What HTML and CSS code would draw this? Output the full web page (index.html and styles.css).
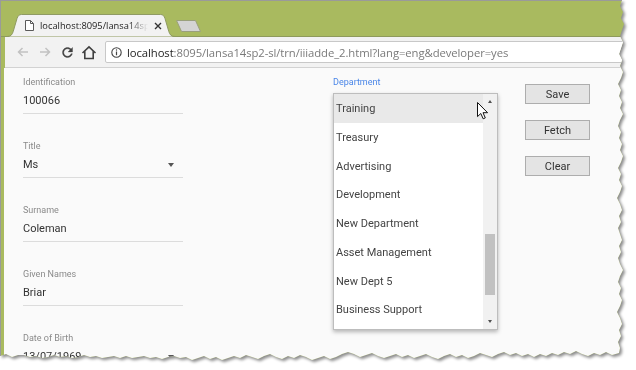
FILE: index.html
```html
<!DOCTYPE html>
<html>
<head>
<meta charset="utf-8">
<title>iiiadde_2</title>
<link rel="stylesheet" href="styles.css">
</head>
<body>
<div class="shot">
  <div class="frame">
    <div class="tabstrip">
      <div class="tab">
        <svg class="tab-bg" width="170" height="23" viewBox="0 0 170 23"><path d="M0 22.5 C4 22.5 5.2 20.5 6.2 17.5 L10 4.5 C11 1.8 12 0.5 14.5 0.5 H153.5 C156 0.5 157 1.8 158 4.5 L161.8 17.5 C162.8 20.5 164 22.5 168 22.5" fill="#f2f2f2" stroke="#8f9a63" stroke-width="1"/></svg>
        <svg class="favicon" width="9" height="11" viewBox="0 0 9 11"><path d="M0.5 0.5 H5.5 L8.5 3.5 V10.5 H0.5 Z" fill="#fff" stroke="#5a5a5a"/><path d="M5.5 0.5 V3.5 H8.5" fill="none" stroke="#5a5a5a"/></svg>
        <span class="tab-title">localhost:8095/lansa14sp2-sl/trn/iiiadde_2.html</span>
        <svg class="tab-close" width="8" height="8" viewBox="0 0 8 8"><path d="M1 1 L7 7 M7 1 L1 7" stroke="#333" stroke-width="1.4"/></svg>
      </div>
      <svg class="newtab" width="27" height="14" viewBox="0 0 27 14"><path d="M1.5 1.5 H20.5 L25.5 12.5 H6.5 Z" fill="#d4d4d4" stroke="#9aa07c" stroke-width="1" stroke-linejoin="round"/></svg>
    </div>
    <div class="toolbar">
      <span class="tbtn"><svg width="12" height="12" viewBox="0 0 12 12"><path d="M11 6 H1.5 M5.5 2 L1.5 6 L5.5 10" fill="none" stroke="#c2c2c2" stroke-width="1.5"/></svg></span>
      <span class="tbtn"><svg width="12" height="12" viewBox="0 0 12 12"><path d="M1 6 H10.5 M6.5 2 L10.5 6 L6.5 10" fill="none" stroke="#c2c2c2" stroke-width="1.5"/></svg></span>
      <span class="tbtn"><svg width="15" height="15" viewBox="0 0 24 24"><path d="M17.65 6.35C16.2 4.9 14.21 4 12 4c-4.42 0-7.99 3.58-7.99 8s3.57 8 7.99 8c3.73 0 6.84-2.55 7.73-6h-2.08c-.82 2.33-3.040 4-5.65 4-3.31 0-6-2.69-6-6s2.69-6 6-6c1.66 0 3.14.69 4.22 1.78L13 11h7V4l-2.35 2.35z" fill="#404040" stroke="#404040" stroke-width="0.6"/></svg></span>
      <span class="tbtn"><svg width="16" height="15" viewBox="0 0 16 15"><path d="M1.5 8 L8 1.8 L14.5 8 M3.8 6 V13.5 H12.2 V6" fill="none" stroke="#404040" stroke-width="1.6" stroke-linejoin="miter"/></svg></span>
      <div class="omnibox">
        <svg class="info" width="11" height="11" viewBox="0 0 11 11"><circle cx="5.5" cy="5.5" r="4.7" fill="none" stroke="#444" stroke-width="1.1"/><path d="M5.5 4.6 V8.3" stroke="#444" stroke-width="1.2"/><circle cx="5.5" cy="3" r="0.7" fill="#444"/></svg>
        <span class="url"><span class="host">localhost</span>:8095/lansa14sp2-sl/trn/iiiadde_2.html?lang=eng&amp;developer=yes</span>
      </div>
    </div>
    <div class="page">
      <div class="col-fields">
        <div class="field">
          <div class="label">Identification</div>
          <div class="value"><span>100066</span></div>
        </div>
        <div class="field">
          <div class="label">Title</div>
          <div class="value"><span>Ms</span><i class="caret"></i></div>
        </div>
        <div class="field">
          <div class="label">Surname</div>
          <div class="value"><span>Coleman</span></div>
        </div>
        <div class="field">
          <div class="label">Given Names</div>
          <div class="value"><span>Briar</span></div>
        </div>
        <div class="field">
          <div class="label">Date of Birth</div>
          <div class="value"><span>13/07/1969</span><i class="caret"></i></div>
        </div>
      </div>
      <div class="col-dept">
        <div class="label label-focus">Department</div>
        <div class="listbox">
          <ul class="options">
            <li class="selected">Training</li>
            <li>Treasury</li>
            <li>Advertising</li>
            <li>Development</li>
            <li>New Department</li>
            <li>Asset Management</li>
            <li>New Dept 5</li>
            <li>Business Support</li>
            <li>Marketing</li>
          </ul>
          <div class="scrollbar">
            <div class="sb-arrow"><i class="tri-up"></i></div>
            <div class="sb-track"><div class="sb-thumb"></div></div>
            <div class="sb-arrow"><i class="tri-down"></i></div>
          </div>
          <svg class="cursor" width="12" height="18" viewBox="0 0 12 18"><path d="M0.5 0.5 V14.6 L3.8 11.5 L6.2 16.8 L8.3 15.9 L6 10.7 H10.6 Z" fill="#fff" stroke="#111" stroke-width="1" stroke-linejoin="round"/></svg>
        </div>
      </div>
      <div class="col-btns">
        <button class="btn">Save</button>
        <button class="btn">Fetch</button>
        <button class="btn">Clear</button>
      </div>
    </div>
  </div>
</div>
</body>
</html>
```

FILE: styles.css
```css
* { box-sizing: border-box; margin: 0; padding: 0; }
html, body { background: #ffffff; }
body { width: 636px; height: 370px; overflow: hidden; font-family: Roboto, "Liberation Sans", sans-serif; }

.shot {
  width: 630px;
  height: 366px;
  filter: drop-shadow(2px 2px 1.5px rgba(0, 0, 0, 0.45));
}

.frame {
  width: 630px;
  height: 366px;
  background: #a9ba5f;
  border-top: 1px solid #9a9a9a;
  border-left: 1px solid #9a9a9a;
  display: flex;
  flex-direction: column;
  clip-path: polygon(0 0, 622px 0, 620px 6px, 623px 12px, 621px 18px, 624px 24px, 622px 30px, 620px 36px, 623px 42px, 621px 48px, 619px 54px, 622px 60px, 620px 66px, 623px 72px, 621px 78px, 618px 84px, 621px 90px, 619px 96px, 622px 102px, 620px 108px, 623px 114px, 620px 120px, 618px 126px, 621px 132px, 619px 138px, 622px 144px, 620px 150px, 623px 156px, 621px 162px, 618px 168px, 621px 174px, 619px 180px, 622px 186px, 620px 192px, 617px 198px, 620px 204px, 622px 210px, 619px 216px, 621px 222px, 618px 228px, 620px 234px, 622px 240px, 619px 246px, 621px 252px, 618px 258px, 620px 264px, 623px 270px, 620px 276px, 618px 282px, 621px 288px, 619px 294px, 622px 300px, 620px 306px, 617px 312px, 620px 318px, 622px 324px, 619px 330px, 621px 336px, 618px 342px, 620px 348px, 619px 353px, 612px 355px, 606px 352px, 600px 355px, 594px 353px, 588px 356px, 582px 354px, 576px 351px, 570px 354px, 564px 352px, 558px 355px, 552px 353px, 546px 356px, 540px 354px, 534px 357px, 528px 354px, 522px 356px, 516px 353px, 510px 355px, 504px 352px, 498px 354px, 492px 357px, 486px 355px, 480px 353px, 474px 356px, 468px 358px, 462px 355px, 456px 357px, 450px 354px, 444px 356px, 438px 359px, 432px 357px, 426px 354px, 420px 356px, 414px 358px, 408px 355px, 402px 357px, 396px 354px, 390px 356px, 384px 358px, 378px 356px, 372px 353px, 366px 355px, 360px 357px, 354px 354px, 348px 352px, 342px 354px, 336px 357px, 330px 359px, 324px 356px, 318px 358px, 312px 360px, 306px 357px, 300px 355px, 294px 358px, 288px 356px, 282px 359px, 276px 357px, 270px 354px, 264px 356px, 258px 359px, 252px 357px, 246px 355px, 240px 358px, 234px 356px, 228px 358px, 222px 360px, 216px 357px, 210px 359px, 204px 356px, 198px 358px, 192px 360px, 186px 357px, 180px 358px, 174px 356px, 168px 357px, 162px 359px, 156px 357px, 150px 358px, 144px 356px, 138px 357px, 132px 358px, 126px 356px, 120px 358px, 114px 356px, 108px 357px, 102px 358px, 96px 356px, 90px 357px, 84px 355px, 78px 357px, 72px 358px, 66px 356px, 60px 357px, 54px 355px, 48px 357px, 42px 358px, 36px 356px, 30px 357px, 24px 355px, 18px 355px, 12px 357px, 6px 354px, 0 356px);
}

/* ---------- tab strip ---------- */
.tabstrip {
  height: 36px;
  flex: none;
  display: flex;
  align-items: flex-end;
  border-bottom: 1px solid #8e9a5c;
  padding-left: 6px;
}
.tab {
  position: relative;
  z-index: 1;
  width: 170px;
  height: 23px;
  margin-bottom: -1px;
  display: flex;
  align-items: center;
  padding-left: 18px;
  font-family: "Open Sans", "Noto Sans", sans-serif;
}
.tab-bg { position: absolute; left: 0; top: 0; z-index: -1; }
.favicon { flex: none; margin-top: -1px; }
.tab-title {
  width: 108px;
  margin-left: 6px;
  white-space: nowrap;
  overflow: hidden;
  font-size: 9.3px;
  color: #222;
  -webkit-mask-image: linear-gradient(to right, #000 82%, transparent 100%);
  mask-image: linear-gradient(to right, #000 82%, transparent 100%);
}
.tab-close { flex: none; margin-left: 6px; }
.newtab { flex: none; margin-left: -2px; margin-bottom: 3px; }

/* ---------- toolbar ---------- */
.toolbar {
  height: 31px;
  flex: none;
  margin-left: 4px;
  background: #f2f2f2;
  border-bottom: 1px solid #d2d2d2;
  display: flex;
  align-items: center;
  padding-left: 7px;
}
.tbtn {
  width: 22px;
  height: 22px;
  flex: none;
  display: flex;
  align-items: center;
  justify-content: center;
}
.omnibox {
  flex: 1;
  height: 22px;
  margin-left: 5px;
  background: #fff;
  border: 1px solid #c8c8c8;
  border-radius: 2px;
  display: flex;
  align-items: center;
  padding-left: 5px;
  font-family: "Open Sans", "Noto Sans", sans-serif;
  white-space: nowrap;
  overflow: hidden;
}
.info { flex: none; }
.url {
  margin-left: 5px;
  font-size: 11.3px;
  letter-spacing: -0.08px;
  color: #7a7a7a;
}
.host { color: #1e1e1e; }

/* ---------- page ---------- */
.page {
  flex: 1;
  margin-left: 3px;
  background: #fafafa;
  display: flex;
  align-items: flex-start;
  padding: 8px 0 0 19px;
  overflow: hidden;
}
.col-fields { width: 160px; flex: none; }
.field {
  margin-bottom: 26px;
  border-bottom: 1px solid #dcdcdc;
  padding-bottom: 3px;
}
.label {
  font-size: 9px;
  line-height: 12px;
  height: 12px;
  color: #8a8a8a;
}
.label-focus { color: #4a86e8; }
.value {
  margin-top: 4px;
  height: 18px;
  line-height: 18px;
  font-size: 11px;
  color: #333;
  display: flex;
  justify-content: space-between;
  align-items: center;
}
.caret {
  width: 0;
  height: 0;
  border-left: 3.5px solid transparent;
  border-right: 3.5px solid transparent;
  border-top: 4px solid #555;
  margin-right: 9px;
}

.col-dept { width: 165px; flex: none; margin-left: 150px; }
.listbox {
  position: relative;
  margin-top: 5px;
  height: 237px;
  background: #fff;
  border: 1px solid #bdbdbd;
  box-shadow: 0 2px 4px rgba(0, 0, 0, 0.28);
  display: flex;
  overflow: hidden;
}
.options {
  list-style: none;
  flex: 1;
  overflow: hidden;
}
.options li {
  height: 28.75px;
  line-height: 29.5px;
  padding-left: 2px;
  font-size: 11px;
  color: #444;
  white-space: nowrap;
}
.options li.selected { background: #e9e9e9; }
.scrollbar {
  width: 14px;
  flex: none;
  background: #f1f1f1;
  display: flex;
  flex-direction: column;
}
.sb-arrow {
  height: 15px;
  display: flex;
  align-items: center;
  justify-content: center;
}
.tri-up, .tri-down {
  width: 0;
  height: 0;
  border-left: 2.5px solid transparent;
  border-right: 2.5px solid transparent;
}
.tri-up { border-bottom: 3px solid #505050; }
.tri-down { border-top: 3px solid #505050; }
.sb-track { flex: 1; padding: 125px 2px 0 2px; }
.sb-thumb { height: 61px; background: #c1c1c1; }
.cursor { position: absolute; left: 143px; top: 8px; }

.col-btns {
  width: 65px;
  flex: none;
  margin-left: 27px;
  padding-top: 8px;
  display: flex;
  flex-direction: column;
  gap: 16px;
}
.btn {
  height: 20px;
  background: #e4e4e4;
  border: 1px solid #adadad;
  font-family: Roboto, "Liberation Sans", sans-serif;
  font-size: 11px;
  color: #333;
}
```
